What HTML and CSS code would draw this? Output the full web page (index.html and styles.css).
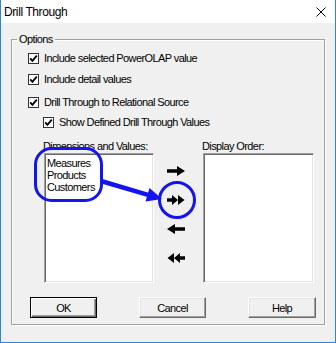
FILE: index.html
```html
<!DOCTYPE html>
<html>
<head>
<meta charset="utf-8">
<link rel="stylesheet" href="styles.css">
</head>
<body>
<div class="window">
  <div class="titlebar">
    <span class="title">Drill Through</span>
    <svg class="close" width="10" height="10" viewBox="0 0 10 10"><path d="M0.5 0.5L9.5 9.5M9.5 0.5L0.5 9.5" stroke="#000" stroke-width="1" fill="none"/></svg>
  </div>
  <div class="group">
    <span class="group-label">Options</span>
    <div class="row r1"><span class="cb"><svg width="9" height="9" viewBox="0 0 9 9"><polyline points="1.2,4.3 3.4,6.8 7.8,1.6" fill="none" stroke="#000" stroke-width="1.8"/></svg></span><span>Include selected PowerOLAP value</span></div>
    <div class="row r2"><span class="cb"><svg width="9" height="9" viewBox="0 0 9 9"><polyline points="1.2,4.3 3.4,6.8 7.8,1.6" fill="none" stroke="#000" stroke-width="1.8"/></svg></span><span>Include detail values</span></div>
    <div class="row r3"><span class="cb"><svg width="9" height="9" viewBox="0 0 9 9"><polyline points="1.2,4.3 3.4,6.8 7.8,1.6" fill="none" stroke="#000" stroke-width="1.8"/></svg></span><span>Drill Through to Relational Source</span></div>
    <div class="row r4"><span class="cb"><svg width="9" height="9" viewBox="0 0 9 9"><polyline points="1.2,4.3 3.4,6.8 7.8,1.6" fill="none" stroke="#000" stroke-width="1.8"/></svg></span><span>Show Defined Drill Through Values</span></div>
    <div class="lists">
      <div class="list-label">Dimensions and Values:</div>
      <div></div>
      <div class="list-label">Display Order:</div>
      <div class="listbox">
        <div>Measures</div>
        <div>Products</div>
        <div>Customers</div>
      </div>
      <div class="arrows">
        <svg width="18" height="10" viewBox="0 0 18 10"><path d="M0 3.3H10V0L18 5L10 10V6.7H0Z"/></svg>
        <svg width="18" height="10" viewBox="0 0 18 10"><path d="M0 3.3H5V0L11 5L5 10V6.7H0Z M11 0L17.5 5L11 10Z"/></svg>
        <svg width="18" height="10" viewBox="0 0 18 10"><path d="M18 3.3H8V0L0 5L8 10V6.7H18Z"/></svg>
        <svg width="18" height="10" viewBox="0 0 18 10"><path d="M18 3.3H13V0L7 5L13 10V6.7H18Z M7 0L0.5 5L7 10Z"/></svg>
      </div>
      <div class="listbox"></div>
    </div>
    <div class="buttons">
      <button class="btn default">OK</button>
      <button class="btn">Cancel</button>
      <button class="btn">Help</button>
    </div>
  </div>
  <svg class="annot" width="336" height="343" viewBox="0 0 336 343">
    <rect x="35.5" y="148.5" width="66" height="52" rx="16" ry="16" fill="none" stroke="#1414ee" stroke-width="3"/>
    <circle cx="177" cy="200" r="17.5" fill="none" stroke="#1414ee" stroke-width="3"/>
    <line x1="101" y1="181" x2="148" y2="194.8" stroke="#1414ee" stroke-width="4.5"/>
    <polygon points="162,199 149.5,188 145.5,201.5" fill="#1414ee"/>
  </svg>
</div>
</body>
</html>
```
FILE: styles.css
```css
body {
  margin: 0;
  font-family: "Liberation Sans", Arial, sans-serif;
  font-size: 11px;
  color: #000;
}

.window {
  position: relative;
  width: 336px;
  height: 343px;
  box-sizing: border-box;
  border: 1px solid #2e86d6;
  border-top: none;
  background: #f0f0f0;
  overflow: hidden;
}

.titlebar {
  height: 23px;
  background: #fff;
  display: flex;
  justify-content: space-between;
  align-items: flex-start;
}

.title {
  font-size: 12px;
  line-height: 22px;
  padding: 1px 0 0 3px;
  letter-spacing: -0.4px;
}

.close {
  display: block;
  margin: 7px 9px 0 0;
}

.group {
  position: relative;
  margin: 16px 0 0 10px;
  width: 314px;
  box-sizing: border-box;
  border: 1px solid #a0a0a0;
  box-shadow: inset 1px 1px 0 #fff, 1px 1px 0 #fff;
  padding: 12px 0 6px 16px;
  letter-spacing: -0.6px;
}

.group-label {
  position: absolute;
  left: 5px;
  top: -7px;
  padding: 0 2px;
  background: #f0f0f0;
  line-height: 13px;
}

.row {
  display: flex;
  align-items: center;
  height: 13px;
  gap: 5px;
  line-height: 13px;
}

.cb {
  width: 11px;
  height: 11px;
  box-sizing: border-box;
  border: 1px solid #333;
  background: #fff;
  display: flex;
  align-items: center;
  justify-content: center;
}

.cb svg {
  display: block;
}

.r2 { margin-top: 8px; }
.r3 { margin-top: 10px; }
.r4 { margin-top: 7px; margin-left: 15px; }

.lists {
  display: grid;
  grid-template-columns: 110px 49px 111px;
  grid-template-rows: 13px 130px;
  margin: 11px 0 0 16px;
}

.list-label {
  line-height: 13px;
  margin-left: -1px;
}

.listbox {
  background: #fff;
  border: 1px solid;
  border-color: #a0a0a0 #fff #fff #a0a0a0;
  box-shadow: inset 1px 1px 0 #696969, inset -1px -1px 0 #e3e3e3;
  box-sizing: border-box;
  padding: 3px 0 0 2px;
  line-height: 12px;
}

.arrows {
  display: flex;
  flex-direction: column;
  align-items: flex-start;
  padding: 13px 0 0 13px;
  gap: 19px;
}

.arrows svg {
  display: block;
  fill: #000;
}

.buttons {
  display: flex;
  gap: 42px;
  margin: 14px 0 0 2px;
}

.btn {
  width: 67px;
  height: 21px;
  box-sizing: border-box;
  margin: 0;
  padding: 0;
  font-family: "Liberation Sans", Arial, sans-serif;
  font-size: 11px;
  letter-spacing: -0.6px;
  color: #000;
  background: #f0f0f0;
  border: 1px solid;
  border-color: #fff #696969 #696969 #fff;
  box-shadow: inset -1px -1px 0 #a0a0a0, inset 1px 1px 0 #e3e3e3;
}

.btn:last-child {
  width: 68px;
}

.btn.default {
  border-color: #000;
  box-shadow: inset 1px 1px 0 #fff, inset -1px -1px 0 #696969, inset -2px -2px 0 #a0a0a0;
}

.annot {
  position: absolute;
  left: -1px;
  top: 0;
  pointer-events: none;
}
```
